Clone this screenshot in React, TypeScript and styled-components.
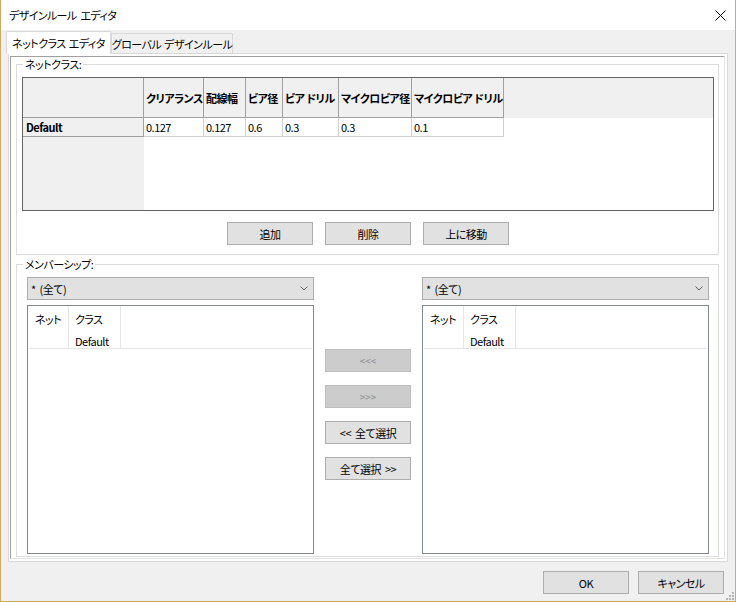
import React from "react";
import styled, { createGlobalStyle, css } from "styled-components";

const GlobalStyle = createGlobalStyle`
  html, body {
    margin: 0;
    padding: 0;
    background: #ffffff;
  }
  body {
    font-family: "Noto Sans CJK JP", "Noto Sans", sans-serif;
    font-size: 11px;
    letter-spacing: -0.5px;
    word-spacing: 2px;
    color: #000;
    font-feature-settings: "palt";
  }
  * {
    box-sizing: border-box;
  }
`;

const COLUMNS = [
  { label: "クリアランス", width: 60, value: "0.127" },
  { label: "配線幅", width: 42, value: "0.127" },
  { label: "ビア径", width: 37, value: "0.6" },
  { label: "ビア ドリル", width: 56, value: "0.3" },
  { label: "マイクロビア径", width: 73, value: "0.3" },
  { label: "マイクロビア ドリル", width: 92, value: "0.1" },
];

const Window = styled.div`
  position: relative;
  width: 736px;
  height: 602px;
  display: flex;
  flex-direction: column;
  background: #f0f0f0;
  border: 1px solid #d5a95d;
  border-top: none;
  overflow: hidden;
`;

const TitleBar = styled.div`
  flex: none;
  height: 30px;
  display: flex;
  align-items: center;
  justify-content: space-between;
  padding: 0 9px 0 8px;
  background: #ffffff;
  letter-spacing: -0.6px;
`;

const Body = styled.div`
  flex: 1;
  min-height: 0;
  display: flex;
  flex-direction: column;
  padding: 1px 7px 7px 7px;
`;

const TabStrip = styled.div`
  flex: none;
  height: 22px;
  display: flex;
  align-items: flex-end;
`;

const Tab = styled.div<{ $active?: boolean; $w: number }>`
  width: ${(p) => p.$w}px;
  display: flex;
  align-items: center;
  justify-content: center;
  white-space: nowrap;
  word-spacing: 1px;
  border: 1px solid #d9d9d9;
  border-bottom: none;
  ${(p) =>
    p.$active
      ? css`
          position: relative;
          z-index: 1;
          height: 23px;
          margin: 0 0 -1px -2px;
          padding-bottom: 1px;
          background: #ffffff;
        `
      : css`
          height: 20px;
          background: #f0f0f0;
        `}
`;

const TabPage = styled.div`
  flex: 1;
  min-height: 0;
  display: flex;
  flex-direction: column;
  background: #ffffff;
  border: 1px solid #d9d9d9;
  padding: 2px 2px 2px 1px;
`;

const Panel = styled.div`
  flex: 1;
  min-height: 0;
  display: flex;
  flex-direction: column;
  border: 1px solid;
  border-color: #a0a0a0 #e3e3e3 #e3e3e3 #a0a0a0;
  padding: 0 5px 1px 5px;
`;

const Group = styled.fieldset<{ $grow?: boolean }>`
  margin: 0;
  padding: 0;
  min-width: 0;
  border: 1px solid #dcdcdc;
  ${(p) =>
    p.$grow &&
    css`
      flex: 1;
      min-height: 0;
      margin-top: 2px;
      display: flex;
      flex-direction: column;
    `}
`;

const Legend = styled.legend`
  margin-left: 6px;
  padding: 0 2px;
  line-height: 14px;
`;

const GroupBody = styled.div<{ $pad: string }>`
  padding: ${(p) => p.$pad};
  display: flex;
  flex-direction: column;
  flex: 1;
  min-height: 0;
`;

const Grid = styled.div`
  height: 134px;
  display: flex;
  flex-direction: column;
  border: 1px solid #646464;
`;

const GridHeadRow = styled.div`
  flex: none;
  height: 40px;
  display: flex;
  background: #f0f0f0;
`;

const GridRow = styled.div`
  flex: none;
  height: 19px;
  display: flex;
`;

const Cell = styled.div<{ $w: number; $head?: boolean }>`
  flex: none;
  width: ${(p) => p.$w}px;
  display: flex;
  align-items: center;
  padding-left: 2px;
  white-space: nowrap;
  word-spacing: 0;
  border-right: 1px solid ${(p) => (p.$head ? "#a0a0a0" : "#d0d0d0")};
  border-bottom: 1px solid ${(p) => (p.$head ? "#a0a0a0" : "#d0d0d0")};
  ${(p) =>
    p.$head &&
    css`
      background: #f0f0f0;
      font-weight: 700;
    `}
`;

const RowHead = styled(Cell)`
  padding-left: 3px;
`;

const GridFill = styled.div`
  flex: 1;
  display: flex;
`;

const RowHeadFill = styled.div`
  width: 121px;
  background: #f0f0f0;
`;

const ButtonRow = styled.div`
  display: flex;
  justify-content: center;
  gap: 12px;
  margin-top: 11px;
`;

const Button = styled.button`
  width: 86px;
  height: 23px;
  flex: none;
  padding: 0;
  font: inherit;
  letter-spacing: inherit;
  word-spacing: inherit;
  color: #000;
  background: #e1e1e1;
  border: 1px solid #adadad;
  white-space: nowrap;

  &:disabled {
    color: #8a8a8a;
    font-size: 10px;
    letter-spacing: 0;
    background: #cccccc;
    border-color: #bfbfbf;
  }
`;

const Columns = styled.div`
  flex: 1;
  min-height: 0;
  display: flex;
`;

const Side = styled.div`
  width: 287px;
  flex: none;
  display: flex;
  flex-direction: column;
  gap: 5px;
`;

const Middle = styled.div`
  flex: 1;
  display: flex;
  flex-direction: column;
  align-items: center;
  gap: 13px;
  padding-top: 72px;
`;

const Combo = styled.div`
  height: 23px;
  flex: none;
  display: flex;
  align-items: center;
  justify-content: space-between;
  padding: 0 5px 0 3px;
  background: #e1e1e1;
  border: 1px solid #adadad;
`;

const ListBox = styled.div`
  flex: 1;
  min-height: 0;
  background: #ffffff;
  border: 1px solid #828790;
`;

const ListHead = styled.div`
  height: 43px;
  display: flex;
  margin: 0 1px;
  border-bottom: 1px solid #e5e5e5;
`;

const ListCol = styled.div<{ $w: number }>`
  width: ${(p) => p.$w}px;
  flex: none;
  padding: 2px 0 0 6px;
  line-height: 22px;
  border-right: 1px solid #e5e5e5;
  white-space: nowrap;
`;

const Footer = styled.div`
  flex: none;
  display: flex;
  justify-content: flex-end;
  gap: 9px;
  margin-top: 9px;
  padding-right: 4px;
`;

const Grip = styled.svg`
  position: absolute;
  right: 1px;
  bottom: 1px;
`;

const Chevron = () => (
  <svg width="8" height="5" viewBox="0 0 8 5">
    <polyline points="0.5,0.5 4,4 7.5,0.5" fill="none" stroke="#606060" strokeWidth="1" />
  </svg>
);

const CloseIcon = () => (
  <svg width="11" height="11" viewBox="0 0 11 11">
    <path d="M0.5 0.5 L10.5 10.5 M10.5 0.5 L0.5 10.5" stroke="#000" strokeWidth="1" />
  </svg>
);

const Member = () => (
  <Side>
    <Combo>
      <span>* (全て)</span>
      <Chevron />
    </Combo>
    <ListBox>
      <ListHead>
        <ListCol $w={40}>ネット</ListCol>
        <ListCol $w={52}>
          クラス
          <br />
          Default
        </ListCol>
      </ListHead>
    </ListBox>
  </Side>
);

export default function App() {
  return (
    <>
      <GlobalStyle />
      <Window>
        <TitleBar>
          <span>デザインルール エディタ</span>
          <CloseIcon />
        </TitleBar>
        <Body>
          <TabStrip>
            <Tab $active $w={105}>
              ネットクラス エディタ
            </Tab>
            <Tab $w={122}>グローバル デザインルール</Tab>
          </TabStrip>
          <TabPage>
            <Panel>
              <Group>
                <Legend>ネットクラス:</Legend>
                <GroupBody $pad="6px 4px 9px 5px">
                  <Grid>
                    <GridHeadRow>
                      <Cell $w={121} $head />
                      {COLUMNS.map((c) => (
                        <Cell key={c.label} $w={c.width} $head>
                          {c.label}
                        </Cell>
                      ))}
                    </GridHeadRow>
                    <GridRow>
                      <RowHead $w={121} $head>
                        Default
                      </RowHead>
                      {COLUMNS.map((c) => (
                        <Cell key={c.label} $w={c.width}>
                          {c.value}
                        </Cell>
                      ))}
                    </GridRow>
                    <GridFill>
                      <RowHeadFill />
                    </GridFill>
                  </Grid>
                  <ButtonRow>
                    <Button>追加</Button>
                    <Button>削除</Button>
                    <Button>上に移動</Button>
                  </ButtonRow>
                </GroupBody>
              </Group>
              <Group $grow>
                <Legend>メンバーシップ:</Legend>
                <GroupBody $pad="6px 9px 2px 10px">
                  <Columns>
                    <Member />
                    <Middle>
                      <Button disabled>&lt;&lt;&lt;</Button>
                      <Button disabled>&gt;&gt;&gt;</Button>
                      <Button>&lt;&lt; 全て選択</Button>
                      <Button>全て選択 &gt;&gt;</Button>
                    </Middle>
                    <Member />
                  </Columns>
                </GroupBody>
              </Group>
            </Panel>
          </TabPage>
          <Footer>
            <Button>OK</Button>
            <Button>キャンセル</Button>
          </Footer>
        </Body>
        <Grip width="8" height="8" viewBox="0 0 8 8">
          <rect x="6" y="0" width="2" height="2" fill="#b4b4b4" />
          <rect x="3" y="3" width="2" height="2" fill="#b4b4b4" />
          <rect x="6" y="3" width="2" height="2" fill="#b4b4b4" />
          <rect x="0" y="6" width="2" height="2" fill="#b4b4b4" />
          <rect x="3" y="6" width="2" height="2" fill="#b4b4b4" />
          <rect x="6" y="6" width="2" height="2" fill="#b4b4b4" />
        </Grip>
      </Window>
    </>
  );
}
